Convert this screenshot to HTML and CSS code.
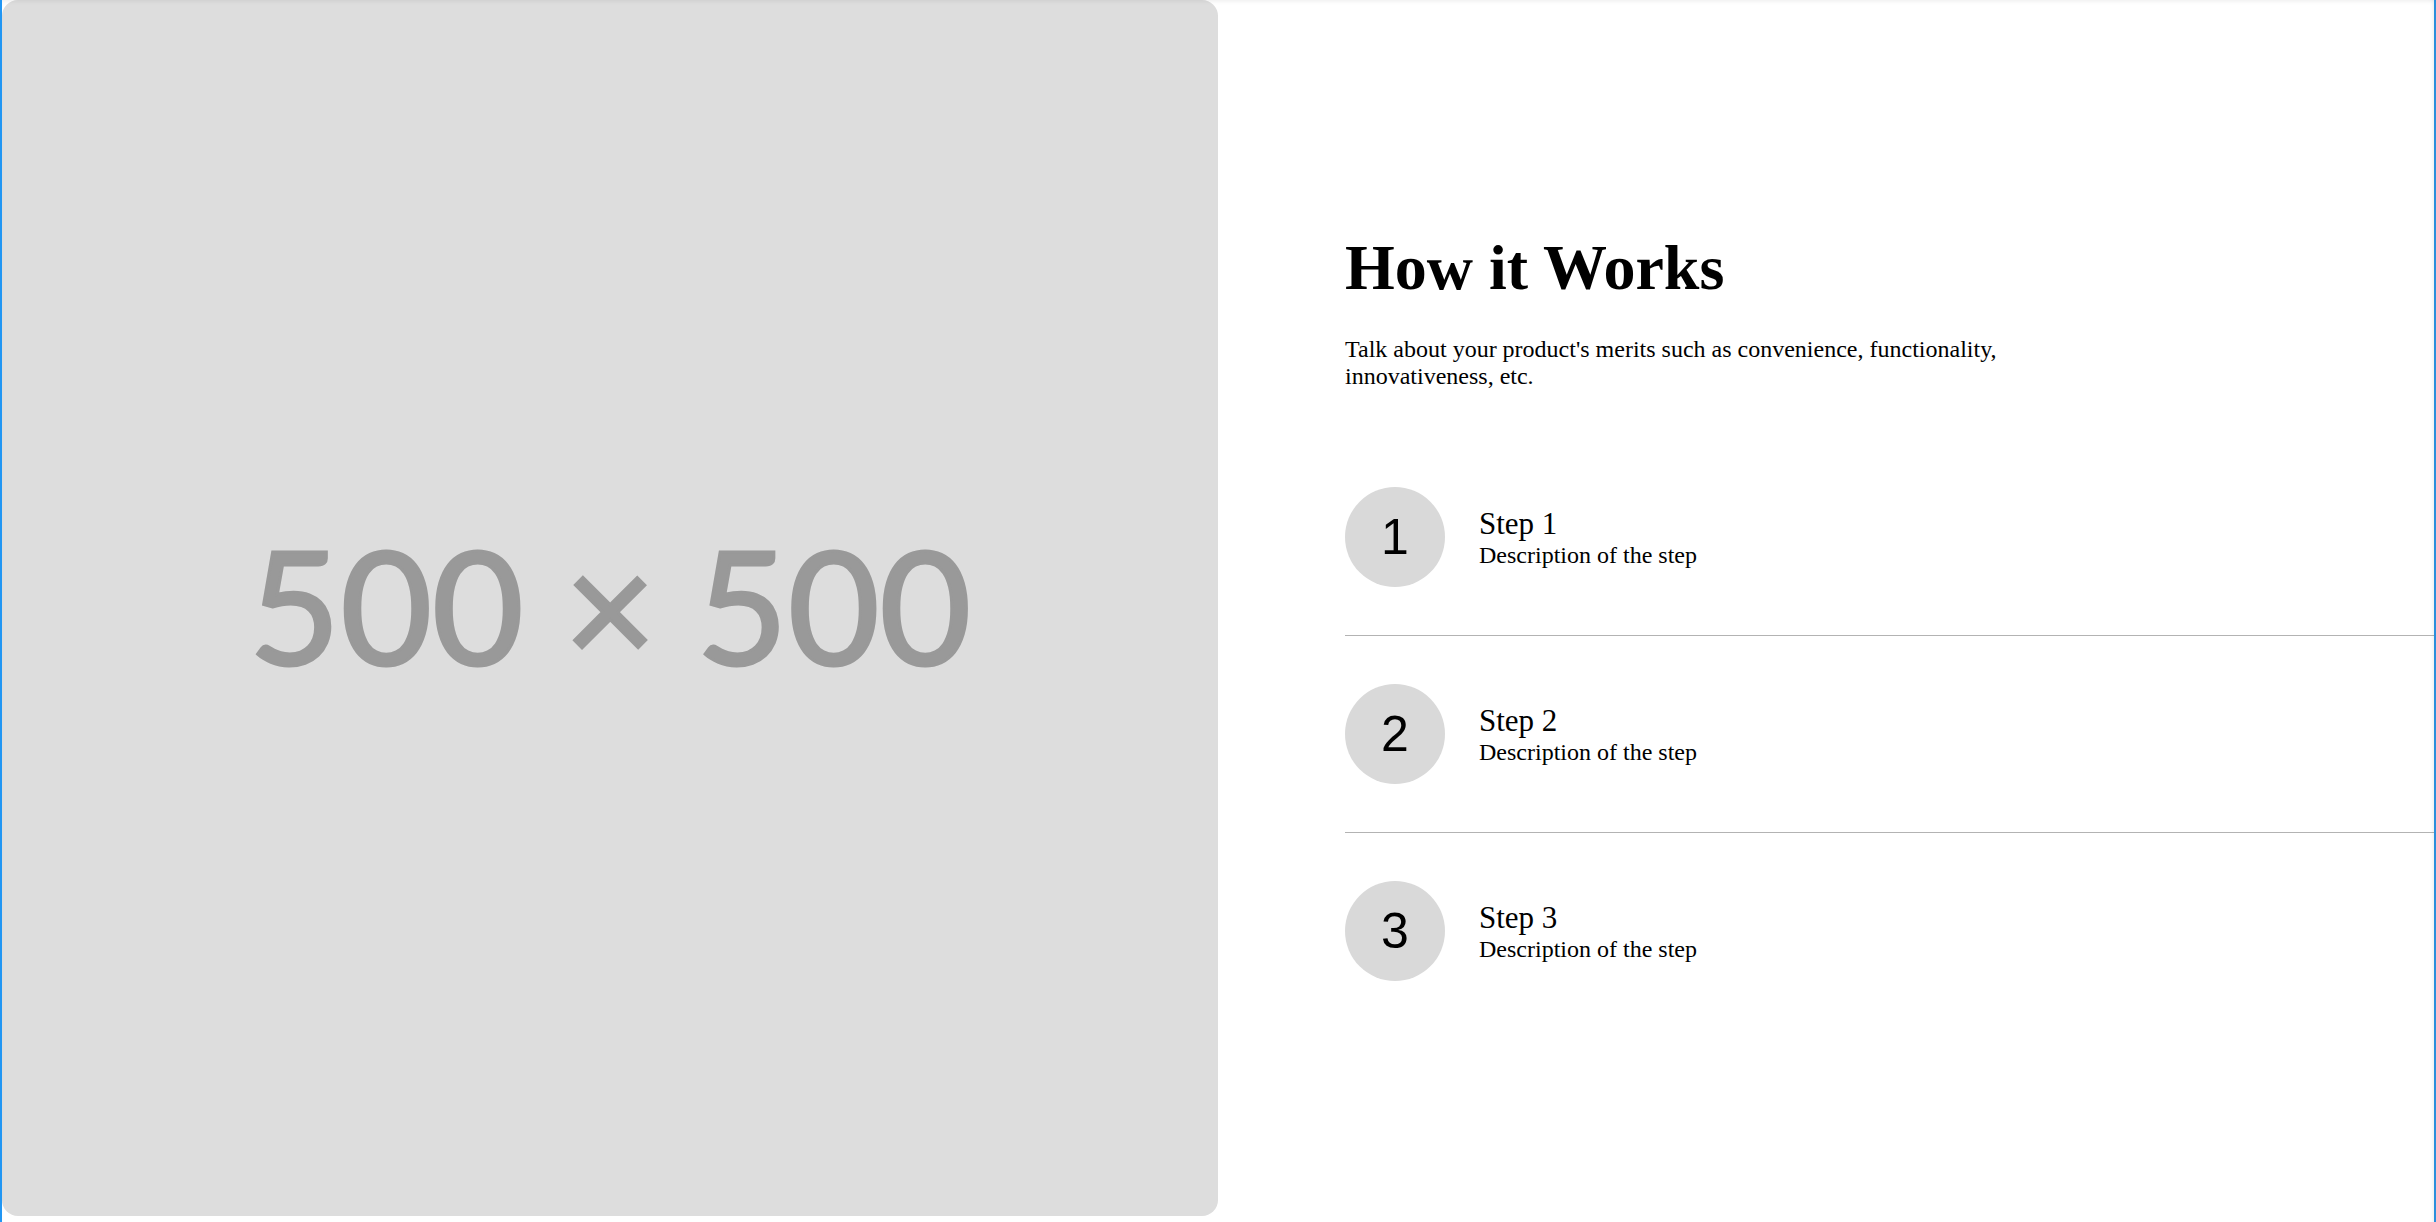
FILE: index.html
```html
<!DOCTYPE html>
<html lang="en">
<head>
<meta charset="utf-8">
<title>How it Works</title>
<link rel="stylesheet" href="styles.css">
</head>
<body>
<div class="frame">
  <div class="media"><span class="ph-text">500 × 500</span></div>
  <section class="content">
    <h1 class="title">How it Works</h1>
    <p class="lead">Talk about your product's merits such as convenience, functionality, innovativeness, etc.</p>
    <ol class="steps">
      <li class="step">
        <div class="num">1</div>
        <div class="step-body">
          <div class="step-title">Step 1</div>
          <div class="step-desc">Description of the step</div>
        </div>
      </li>
      <li class="step">
        <div class="num">2</div>
        <div class="step-body">
          <div class="step-title">Step 2</div>
          <div class="step-desc">Description of the step</div>
        </div>
      </li>
      <li class="step">
        <div class="num">3</div>
        <div class="step-body">
          <div class="step-title">Step 3</div>
          <div class="step-desc">Description of the step</div>
        </div>
      </li>
    </ol>
  </section>
</div>
</body>
</html>
```
FILE: styles.css
```css
html, body {
  margin: 0;
  padding: 0;
  background: #fff;
}
body {
  font-family: "Liberation Serif", "Times New Roman", serif;
  color: #000;
}
.frame {
  position: relative;
  display: flex;
  align-items: flex-start;
  height: 1222px;
  box-sizing: border-box;
  border-left: 2px solid #2196f3;
  border-right: 2px solid #2b8fdc;
  overflow: hidden;
}
.frame::after {
  content: "";
  position: absolute;
  inset: 0;
  pointer-events: none;
  box-shadow: inset 0 3px 4px -2px rgba(0, 0, 0, 0.08), inset -4px 0 4px -3px rgba(0, 0, 0, 0.07);
}
.media {
  flex: 0 0 1216px;
  height: 1216px;
  box-sizing: border-box;
  padding-bottom: 8px;
  background: #dddddd;
  border-radius: 16px;
  display: flex;
  align-items: center;
  justify-content: center;
}
.ph-text {
  font-family: Lato, "Noto Sans", sans-serif;
  font-size: 158px;
  font-weight: 400;
  color: #999999;
  -webkit-text-stroke: 3px #999999;
  line-height: 1;
  white-space: nowrap;
}
.content {
  flex: 1;
  min-width: 0;
  padding: 231px 0 0 127px;
}
.title {
  margin: 0;
  font-size: 64px;
  font-weight: 700;
  line-height: normal;
}
.lead {
  margin: 31px 0 0;
  font-size: 24px;
  line-height: normal;
  max-width: 720px;
}
.steps {
  list-style: none;
  margin: 49px 0 0;
  padding: 0;
}
.step {
  display: flex;
  align-items: center;
  padding: 48px 0;
  border-bottom: 1px solid #b3b3b3;
}
.step:last-child {
  border-bottom: 0;
}
.num {
  flex: none;
  width: 100px;
  height: 100px;
  border-radius: 50%;
  background: #d9d9d9;
  display: flex;
  align-items: center;
  justify-content: center;
  font-family: "Liberation Sans", Arial, sans-serif;
  font-size: 50px;
  color: #000;
}
.step-body {
  margin-left: 34px;
}
.step-title {
  font-size: 31px;
  line-height: normal;
}
.step-desc {
  font-size: 24px;
  line-height: normal;
}
```
